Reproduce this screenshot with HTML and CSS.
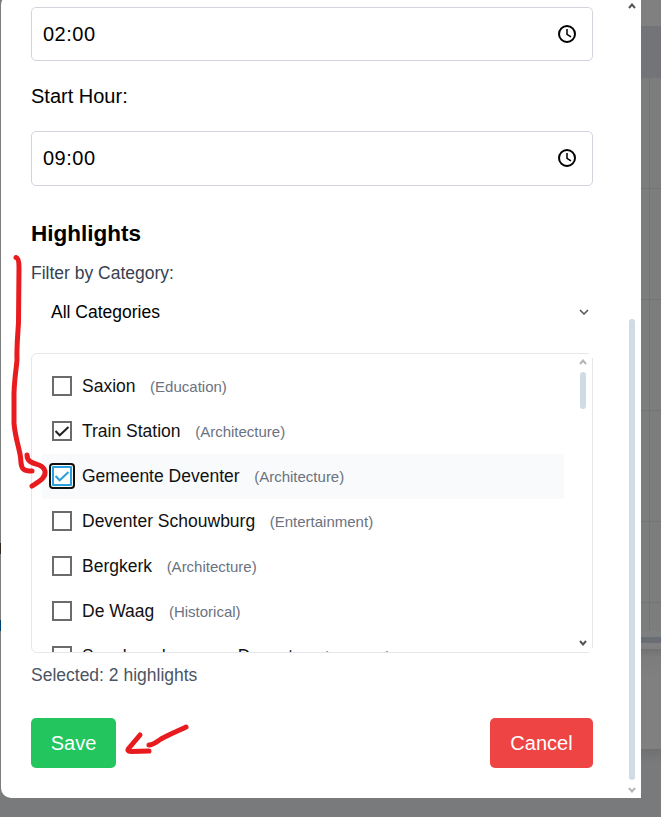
FILE: index.html
```html
<!DOCTYPE html>
<html lang="en">
<head>
<meta charset="utf-8">
<title>Highlights</title>
<link rel="stylesheet" href="styles.css">
</head>
<body>
<div class="screen">
  <div class="edge"><i class="edge-dark"></i><i class="edge-blue"></i></div>
  <main class="modal">
    <div class="content">
      <div class="field"><span>02:00</span>
        <svg class="clock" viewBox="0 0 20 20"><circle cx="10" cy="10" r="8"/><path d="M10 5v5.3l4 2.5"/></svg></div>
      <div class="label">Start Hour:</div>
      <div class="field field-tall"><span>09:00</span>
        <svg class="clock" viewBox="0 0 20 20"><circle cx="10" cy="10" r="8"/><path d="M10 5v5.3l4 2.5"/></svg></div>
      <h2>Highlights</h2>
      <div class="filter-label">Filter by Category:</div>
      <div class="select"><span>All Categories</span>
        <svg class="chev" viewBox="0 0 10 6"><path d="M1 1l4 4 4-4"/></svg></div>
      <div class="list">
        <div class="options">
          <label class="option"><span class="box"></span><span>Saxion</span><small>(Education)</small></label>
          <label class="option"><span class="box"><svg viewBox="0 0 16 16"><path d="M1.5 8l4.2 4.3L14.5 4"/></svg></span><span>Train Station</span><small>(Architecture)</small></label>
          <label class="option hovered"><span class="box focused"><svg viewBox="0 0 16 16"><path d="M1.5 8l4.2 4.3L14.5 4"/></svg></span><span>Gemeente Deventer</span><small>(Architecture)</small></label>
          <label class="option"><span class="box"></span><span>Deventer Schouwburg</span><small>(Entertainment)</small></label>
          <label class="option"><span class="box"></span><span>Bergkerk</span><small>(Architecture)</small></label>
          <label class="option"><span class="box"></span><span>De Waag</span><small>(Historical)</small></label>
          <label class="option"><span class="box"></span><span>Speelgoedmuseum Deventer</span><small>(Museum)</small></label>
        </div>
        <div class="list-scroll">
          <svg class="arrow pale" viewBox="0 0 8 6"><path d="M1 5l3-3.5L7 5"/></svg>
          <i class="list-thumb"></i>
          <svg class="arrow" viewBox="0 0 8 6"><path d="M1 1l3 3.5L7 1"/></svg>
        </div>
      </div>
      <div class="selected">Selected: 2 highlights</div>
      <div class="actions"><button class="save">Save</button><button class="cancel">Cancel</button></div>
    </div>
    <div class="page-scroll">
      <svg class="arrow" viewBox="0 0 8 6"><path d="M1 5l3-3.5L7 5"/></svg>
      <i class="page-thumb"></i>
      <svg class="arrow pale" viewBox="0 0 8 6"><path d="M1 1l3 3.5L7 1"/></svg>
    </div>
  </main>
  <aside class="backdrop">
    <div class="bd-top"></div>
    <div class="bd-head"></div>
    <div class="bd-row"></div><div class="bd-row"></div><div class="bd-row"></div><div class="bd-row"></div><div class="bd-row bd-short"></div>
    <div class="bd-row bd-last"></div>
    <div class="bd-gap"></div>
    <div class="bd-bar"></div>
    <div class="bd-under"></div>
    <div class="bd-card"></div>
    <div class="bd-foot"></div>
  </aside>
  <svg class="ink" viewBox="0 0 661 817">
    <path d="M16 257.500C18.500 258 19 262 19 268L18.500 322C18 334 16.500 345 17 360C16 372 13.500 384 14 400L14 423C15 437 19 447 20.500 457C21 463 21 468 24 469.500C26 471 29 471 32 471"/>
    <path d="M27 455C27 462 33 463 39 465C46 468 47 474 42 479C39 482 35 484 32 486"/>
    <path d="M186 727C178 731 168 735 161 739C155 743 153 745 149 745"/>
    <path d="M140 735L129 748C127 750.500 128 751.500 131 751.500L149 751"/>
  </svg>
</div>
</body>
</html>
```
FILE: styles.css
```css
* { box-sizing: border-box; }
body { margin: 0; background: #797a7c; font-family: "Liberation Sans", Arial, sans-serif; font-size: 20px; color: #000; }
.screen { position: relative; display: flex; width: 661px; height: 817px; overflow: hidden; background: #797a7c; }
.edge { width: 1px; flex: none; height: 798px; padding-top: 543px; background: #7c7d7d; }
.edge i { display: block; }
.edge-dark { height: 11px; background: #302820; }
.edge-blue { height: 11px; margin-top: 66px; background: #00426e; }
.modal { display: flex; justify-content: space-between; width: 640px; height: 803px; margin-top: -5px; padding-top: 5px; background: #fff; border-radius: 10px 0 0 10px; }
.content { width: 592px; padding: 7px 0 0 30px; }
.field { display: flex; align-items: center; justify-content: space-between; height: 54px; padding: 0 15px 0 11px; border: 1px solid #d1d5db; border-radius: 5px; letter-spacing: .5px; }
.field-tall { height: 55px; }
.clock { width: 20px; height: 20px; margin-bottom: 1px; fill: none; stroke: #000; stroke-width: 2; }
.clock path { stroke-width: 1.5; }
.label { height: 70px; line-height: 70px; }
h2 { margin: 30px 0 0; height: 36px; line-height: 36px; font-size: 22.5px; }
.filter-label { margin-top: 8px; height: 26px; line-height: 26px; font-size: 17.5px; color: #374151; }
.select { display: flex; align-items: center; justify-content: space-between; height: 52px; padding: 0 4px 0 20px; font-size: 17.5px; }
.chev { width: 10px; height: 6px; fill: none; stroke: #555; stroke-width: 1.5; }
.list { position: relative; display: flex; justify-content: space-between; height: 300px; margin-top: 15px; padding: 10px 5px 0 10px; border: 1px solid #e5e7eb; border-radius: 6px; }
.list::before, .list::after { content: ""; position: absolute; right: -1px; width: 4px; height: 5px; background: #fff; }
.list::before { top: -1px; }
.list::after { bottom: -1px; }
.options { width: 522px; height: 288px; overflow: hidden; }
.option { display: flex; align-items: center; height: 45px; padding-left: 10px; font-size: 17.5px; color: #111; white-space: nowrap; }
.hovered { background: #f9fafb; }
.box { width: 20px; height: 20px; margin: 0 10px 1px 0; flex: none; border: 2px solid #6b6b6b; background: #fff; }
.box svg { display: block; width: 16px; height: 16px; fill: none; stroke: #222; stroke-width: 2; }
.focused { border-color: #2b9fd9; outline: 2px solid #101010; outline-offset: 1px; border-radius: 1px; }
.focused svg { stroke: #2b9fd9; }
small { margin: -1px 0 0 14.6px; font-size: 15px; color: #6b7280; }
.list-scroll { display: flex; flex-direction: column; align-items: center; width: 9px; height: 287px; margin-top: -5px; }
.arrow { width: 8px; height: 6px; flex: none; fill: none; stroke: #555; stroke-width: 2; }
.pale { stroke: #b5b5b5; }
.list-thumb { width: 6px; height: 37px; margin: 7px 0 auto; border-radius: 3px; background: #d1dbe4; }
.selected { margin-top: 9px; height: 26px; line-height: 26px; font-size: 17.5px; color: #4b5563; }
.actions { display: flex; justify-content: space-between; margin-top: 30px; }
button { height: 50px; padding: 0; border: 0; border-radius: 5px; color: #fff; font: 20px "Liberation Sans", Arial, sans-serif; }
.save { width: 85px; background: #22c55e; }
.cancel { width: 103px; background: #ef4444; }
.page-scroll { display: flex; flex-direction: column; align-items: center; width: 18px; padding: 3px 0 5px; }
.page-thumb { width: 6px; height: 461px; margin: auto 0 7px; border-radius: 3px; background: #d1dbe4; }
.backdrop { display: flex; flex-direction: column; width: 20px; }
.bd-top { height: 26px; background: #808080; }
.bd-head { height: 52px; background: #727477; }
.bd-row { height: 111px; border-bottom: 1px solid #727475; background: linear-gradient(90deg, transparent 8px, #727475 8px, #727475 9px, transparent 9px) #7c7e7d; }
.bd-short { height: 81px; }
.bd-last { height: 28px; border-bottom: 0; }
.bd-gap { height: 6px; background: #7e7f7f; }
.bd-bar { height: 6px; background: #686e73; }
.bd-under { height: 6px; background: #808080; }
.bd-card { height: 100px; background: linear-gradient(#717171, #7c7c7c 8px, #808080 30px); }
.bd-foot { height: 68px; background: linear-gradient(#6f7072, #797a7c 14px); }
.ink { position: absolute; inset: 0; width: 661px; height: 817px; fill: none; stroke: #e81c1f; stroke-width: 5; stroke-linecap: round; stroke-linejoin: round; }
```
